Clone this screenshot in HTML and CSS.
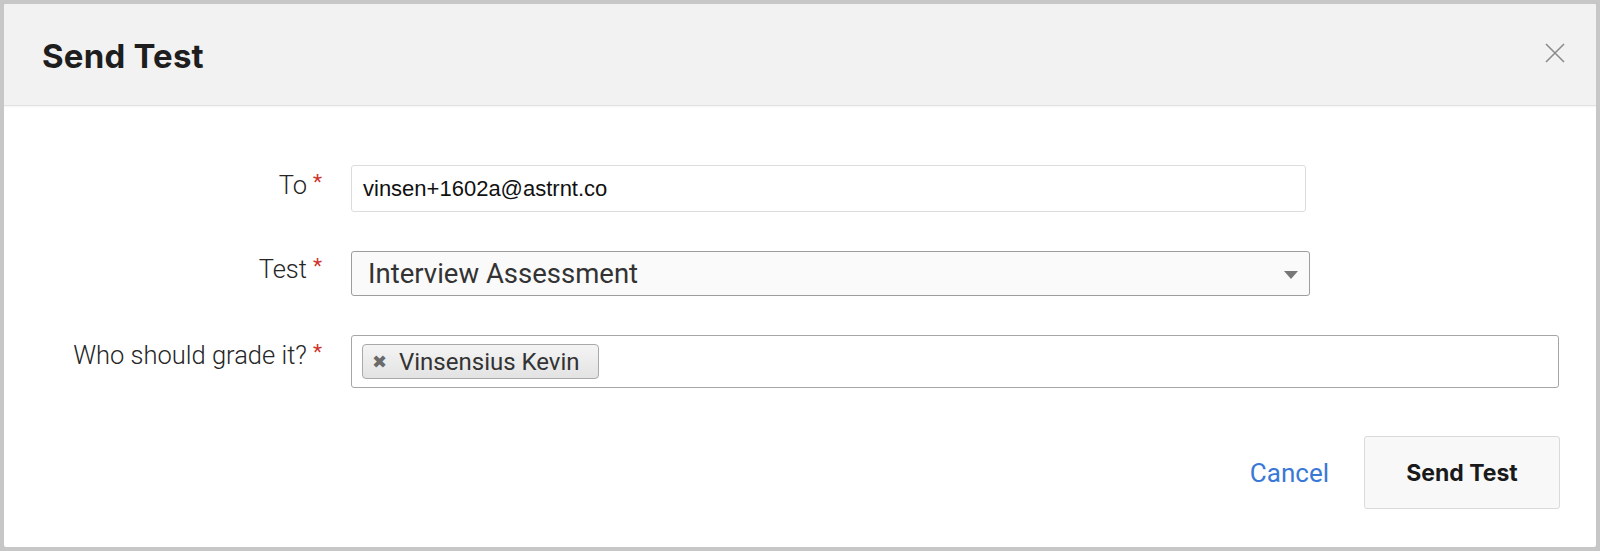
FILE: index.html
```html
<!DOCTYPE html>
<html>
<head>
<meta charset="utf-8">
<link rel="stylesheet" href="styles.css">
</head>
<body>
<div class="modal">
  <div class="header">
    <h1 class="title">Send Test</h1>
    <svg class="close" width="20" height="20" viewBox="0 0 20 20"><path d="M1 1 L19 19 M19 1 L1 19" stroke="#8c8c8c" stroke-width="1.6" fill="none"/></svg>
  </div>
  <div class="body">
    <div class="form">
      <div class="label">To<span class="req">*</span></div>
      <div class="input email">vinsen+1602a@astrnt.co</div>

      <div class="label label-select">Test<span class="req">*</span></div>
      <div class="select"><span>Interview Assessment</span><span class="caret"></span></div>

      <div class="label label-tags">Who should grade it?<span class="req">*</span></div>
      <div class="tags">
        <div class="chip"><span class="chip-x">✖</span><span class="chip-text">Vinsensius Kevin</span></div>
      </div>
    </div>
    <div class="footer">
      <a class="cancel">Cancel</a>
      <button class="send">Send Test</button>
    </div>
  </div>
</div>
</body>
</html>
```
FILE: styles.css
```css
html, body {
  margin: 0;
  padding: 0;
}
body {
  background: #c7c7c7;
  width: 1600px;
  height: 551px;
  overflow: hidden;
  font-family: Roboto, "Liberation Sans", sans-serif;
}
.modal {
  margin: 4px;
  width: 1592px;
  height: 543px;
  background: #fff;
  border-radius: 2px;
  overflow: hidden;
}
.header {
  height: 101px;
  background: #f2f2f2;
  border-bottom: 1px solid #e2e2e2;
  box-shadow: 0 1px 1px rgba(0,0,0,0.04);
  display: flex;
  align-items: center;
  justify-content: space-between;
  padding: 0 31px 0 38px;
}
.title {
  margin: 0;
  font-family: Inter, "Liberation Sans", sans-serif;
  font-weight: 700;
  font-size: 33px;
  color: #1e1e1e;
  letter-spacing: 0.2px;
  padding-top: 3px;
}
.close {
  display: block;
  margin-top: -4px;
}
.body {
  padding: 59px 36px 0 0;
}
.form {
  display: grid;
  grid-template-columns: 318px 1fr;
  column-gap: 29px;
  row-gap: 39px;
  align-items: start;
}
.label {
  text-align: right;
  font-size: 25.5px;
  font-weight: 300;
  color: #262626;
  padding-top: 5px;
  line-height: 30px;
  white-space: nowrap;
}
.label-select {
  padding-top: 3px;
}
.label-tags {
  padding-top: 5px;
}
.req {
  color: #d0332b;
  font-size: 21px;
  margin-left: 6px;
  vertical-align: top;
  position: relative;
  top: -3px;
  font-weight: 400;
}
.input {
  box-sizing: border-box;
  width: 955px;
  height: 47px;
  border: 1px solid #dcdcdc;
  border-radius: 3px;
  padding: 0 11px;
  display: flex;
  align-items: center;
}
.email {
  font-family: "Liberation Sans", Arial, sans-serif;
  font-size: 22px;
  color: #111;
}
.select {
  box-sizing: border-box;
  width: 959px;
  height: 45px;
  border: 1px solid #9d9d9d;
  border-radius: 3px;
  background: #fafafa;
  padding: 0 11px 0 16px;
  display: flex;
  align-items: center;
  justify-content: space-between;
  font-size: 27.5px;
  color: #333;
}
.caret {
  width: 0;
  height: 0;
  border-left: 7.5px solid transparent;
  border-right: 7.5px solid transparent;
  border-top: 8px solid #777;
  margin-top: 2px;
}
.tags {
  box-sizing: border-box;
  width: 1208px;
  height: 53px;
  border: 1px solid #a6a6a6;
  border-radius: 3px;
  padding: 8px 10px;
  display: flex;
  align-items: flex-start;
}
.chip {
  box-sizing: border-box;
  height: 35px;
  width: 237px;
  border: 1px solid #a9a9a9;
  border-radius: 4px;
  background: linear-gradient(#f4f4f4, #e3e3e3);
  display: flex;
  align-items: center;
  padding-left: 9px;
}
.chip-x {
  font-size: 18px;
  color: #6a6a6a;
  width: 27px;
  font-family: "DejaVu Sans", sans-serif;
}
.chip-text {
  font-size: 24px;
  color: #333;
}
.footer {
  display: flex;
  justify-content: flex-end;
  align-items: center;
  gap: 35px;
  margin-top: 48px;
}
.cancel {
  font-size: 26px;
  color: #3a78d6;
}
.send {
  box-sizing: border-box;
  width: 196px;
  height: 73px;
  background: #f8f8f8;
  border: 1px solid #dadada;
  border-radius: 3px;
  font-family: Inter, "Liberation Sans", sans-serif;
  font-weight: 700;
  font-size: 23px;
  color: #1a1a1a;
  padding: 0;
}
```
